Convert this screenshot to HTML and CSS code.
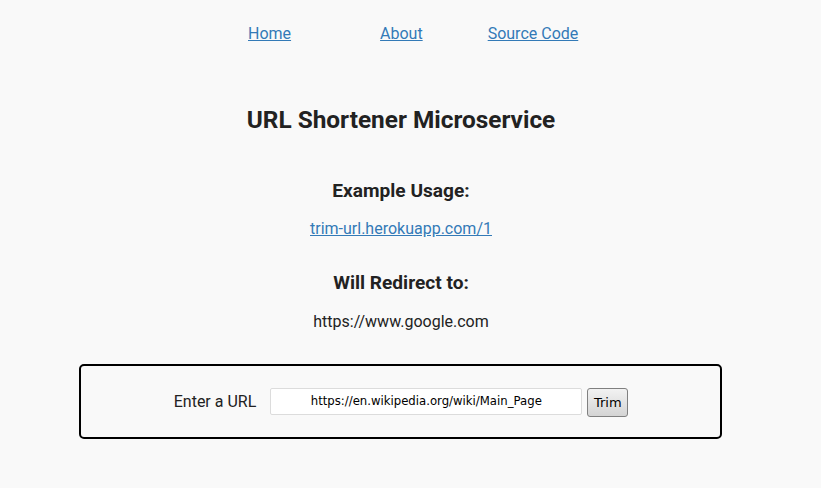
FILE: index.html
```html
<!DOCTYPE html>
<html>
<head>
<meta charset="utf-8">
<link rel="stylesheet" href="styles.css">
</head>
<body>
<div class="page">
  <nav class="nav">
    <a class="nav-link nav-home" href="#">Home</a>
    <a class="nav-link nav-about" href="#">About</a>
    <a class="nav-link nav-source" href="#">Source Code</a>
  </nav>
  <h1 class="title">URL Shortener Microservice</h1>
  <h3 class="sub sub-first">Example Usage:</h3>
  <p class="line"><a class="link" href="#">trim-url.herokuapp.com/1</a></p>
  <h3 class="sub">Will Redirect to:</h3>
  <p class="line line-last">https://www.google.com</p>
  <form class="box">
    <label class="label">Enter a URL</label>
    <input class="url-input" type="text" value="https://en.wikipedia.org/wiki/Main_Page">
    <button class="btn" type="button">Trim</button>
  </form>
</div>
</body>
</html>
```
FILE: styles.css
```css
html, body {
  margin: 0;
  padding: 0;
  background: #f9f9f9;
}
body {
  font-family: Roboto, "Liberation Sans", sans-serif;
  color: #222;
}
.page {
  width: 802px;
  text-align: center;
}
.nav {
  display: flex;
  justify-content: flex-start;
  padding-top: 24px;
  height: 21px;
  padding-left: 248px;
  font-size: 16px;
  line-height: 20px;
}
.nav-link {
  color: #337ab7;
}
.nav-home { margin-right: 89px; }
.nav-about { margin-right: 65px; }
.title {
  margin: 61px 0 0;
  font-size: 24.4px;
  line-height: 28px;
  font-weight: 700;
  color: #222;
}
.sub {
  margin: 0;
  font-size: 19.1px;
  line-height: 22px;
  font-weight: 700;
  color: #222;
}
.sub-first { margin-top: 46px; }
.line {
  margin: 16px 0 0;
  font-size: 16px;
  line-height: 22px;
}
.line-last { margin-top: 17px; }
.line + .sub { margin-top: 32px; }
.link { color: #337ab7; }
.box {
  margin: 31px 0 0 79px;
  width: 639px;
  height: 71px;
  border: 2px solid #000;
  border-radius: 5px;
  display: flex;
  align-items: center;
  justify-content: center;
  box-sizing: content-box;
}
.label {
  font-size: 16px;
  margin-right: 14px;
  margin-top: 0;
  margin-left: 1px;
}
.url-input {
  width: 312px;
  height: 27px;
  box-sizing: border-box;
  border: 1px solid #dcdcdc;
  border-radius: 2px;
  background: #fff;
  font-family: Tahoma, "DejaVu Sans", sans-serif;
  font-size: 11.7px;
  text-align: center;
  padding: 0;
  color: #000;
  margin-top: -1px;
}
.btn {
  margin-left: 5px;
  width: 41px;
  height: 29px;
  border: 1px solid #808080;
  border-radius: 3px;
  background: linear-gradient(#f2f2f2, #d4d4d4);
  font-family: Tahoma, "DejaVu Sans", sans-serif;
  font-size: 13px;
  color: #000;
  padding: 0;
  margin-top: 1px;
}
```
